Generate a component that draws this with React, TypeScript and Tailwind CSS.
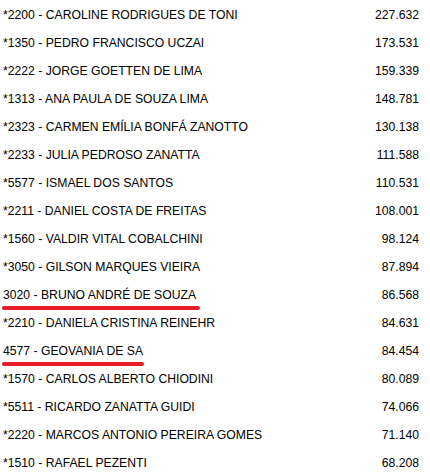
import React from 'react';

type Row = { code: string; name: string; value: string; star: boolean; mark?: number };

const rows: Row[] = [
  { code: '2200', name: 'CAROLINE RODRIGUES DE TONI', value: '227.632', star: true },
  { code: '1350', name: 'PEDRO FRANCISCO UCZAI', value: '173.531', star: true },
  { code: '2222', name: 'JORGE GOETTEN DE LIMA', value: '159.339', star: true },
  { code: '1313', name: 'ANA PAULA DE SOUZA LIMA', value: '148.781', star: true },
  { code: '2323', name: 'CARMEN EMÍLIA BONFÁ ZANOTTO', value: '130.138', star: true },
  { code: '2233', name: 'JULIA PEDROSO ZANATTA', value: '111.588', star: true },
  { code: '5577', name: 'ISMAEL DOS SANTOS', value: '110.531', star: true },
  { code: '2211', name: 'DANIEL COSTA DE FREITAS', value: '108.001', star: true },
  { code: '1560', name: 'VALDIR VITAL COBALCHINI', value: '98.124', star: true },
  { code: '3050', name: 'GILSON MARQUES VIEIRA', value: '87.894', star: true },
  { code: '3020', name: 'BRUNO ANDRÉ DE SOUZA', value: '86.568', star: false, mark: 198 },
  { code: '2210', name: 'DANIELA CRISTINA REINEHR', value: '84.631', star: true },
  { code: '4577', name: 'GEOVANIA DE SA', value: '84.454', star: false, mark: 142 },
  { code: '1570', name: 'CARLOS ALBERTO CHIODINI', value: '80.089', star: true },
  { code: '5511', name: 'RICARDO ZANATTA GUIDI', value: '74.066', star: true },
  { code: '2220', name: 'MARCOS ANTONIO PEREIRA GOMES', value: '71.140', star: true },
  { code: '1510', name: 'RAFAEL PEZENTI', value: '68.208', star: true },
];

export default function App() {
  return (
    <div className="w-[430px] h-[476px] overflow-hidden bg-white pt-[1px] font-['Liberation_Sans',Arial,sans-serif] text-[12.2px] text-black">
      {rows.map((r) => (
        <div key={r.code} className="relative flex h-[28px] items-center justify-between pl-[3px] pr-[11px]">
          <span className="whitespace-nowrap">
            {r.star ? '*' : ''}
            {r.code} - {r.name}
          </span>
          <span>{r.value}</span>
          {r.mark && (
            <div
              className="absolute left-[2px] bottom-[-1px] h-[4px] rounded-full bg-[#e81c27]"
              style={{ width: r.mark }}
            />
          )}
        </div>
      ))}
    </div>
  );
}
